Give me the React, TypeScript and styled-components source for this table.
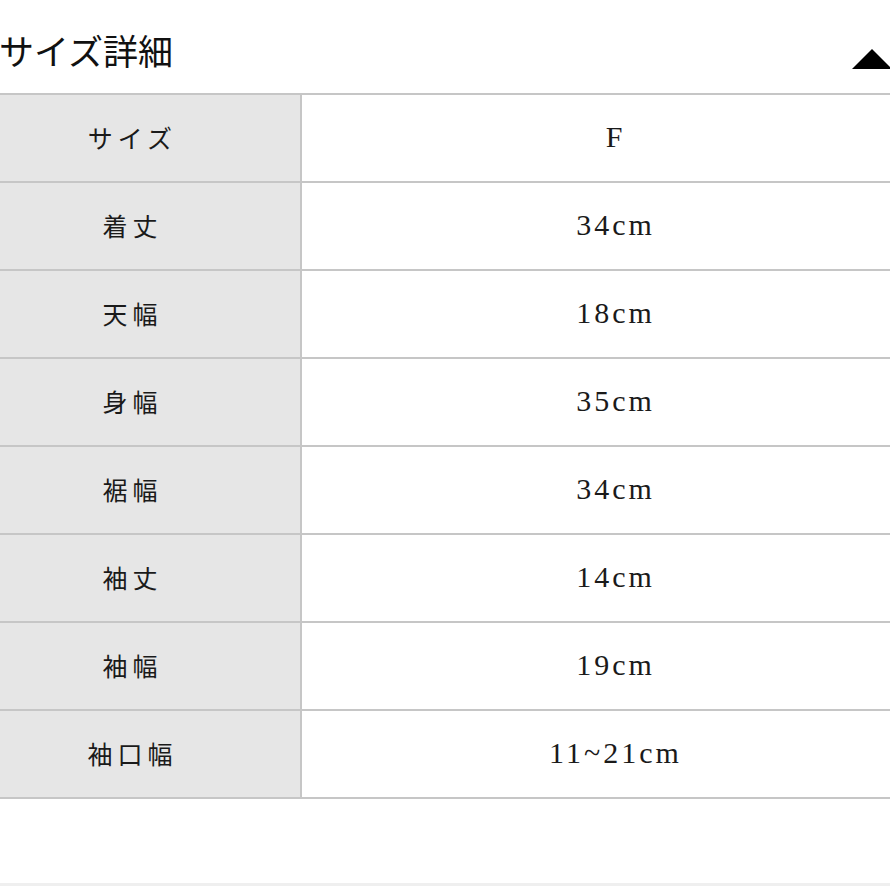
import React from "react"
import styled, { createGlobalStyle } from "styled-components"

type SizeRow = {
    label: string
    value: string
}

const rows: SizeRow[] = [
    { label: "サイズ", value: "F" },
    { label: "着丈", value: "34cm" },
    { label: "天幅", value: "18cm" },
    { label: "身幅", value: "35cm" },
    { label: "裾幅", value: "34cm" },
    { label: "袖丈", value: "14cm" },
    { label: "袖幅", value: "19cm" },
    { label: "袖口幅", value: "11~21cm" },
]

const App: React.FC = () => {
    return (
        <>
            <GlobalStyle />
            <Page>
                <Header>
                    <Title>サイズ詳細</Title>
                    <Toggle aria-label="閉じる">
                        <svg width="40" height="20" viewBox="0 0 40 20">
                            <polygon points="20,0 40,20 0,20" fill="#000" />
                        </svg>
                    </Toggle>
                </Header>
                <SizeTable>
                    {rows.map(row => (
                        <Row key={row.label}>
                            <LabelCell>{row.label}</LabelCell>
                            <ValueCell>{row.value}</ValueCell>
                        </Row>
                    ))}
                </SizeTable>
                <Footer />
            </Page>
        </>
    )
}

export default App

const GlobalStyle = createGlobalStyle`
    html, body {
        margin: 0;
        padding: 0;
        background: #fff;
        overflow: hidden;
    }
    body {
        font-family: "Liberation Serif", "Noto Sans CJK JP", serif;
        color: #111;
    }
`
const Page = styled.div`
    width: 890px;
    height: 890px;
    overflow: hidden;
    display: flex;
    flex-direction: column;
`
const Header = styled.div`
    height: 93px;
    display: flex;
    align-items: center;
    justify-content: space-between;
`
const Title = styled.h2`
    margin: 6px 0 0 -1px;
    font-family: "Noto Sans CJK JP", sans-serif;
    font-weight: 400;
    font-size: 35px;
    line-height: 1;
    color: #111;
`
const Toggle = styled.button`
    margin: 25px -2px 0 0;
    padding: 0;
    border: 0;
    background: none;
    display: flex;
    & svg { display: block; }
`
const SizeTable = styled.div`
    width: 966px;
    margin-left: -40px;
    border-top: 2px solid #c6c6c6;
    display: flex;
    flex-direction: column;
`
const Row = styled.div`
    display: grid;
    grid-template-columns: 342px 1fr;
    height: 88px;
    box-sizing: border-box;
    border-bottom: 2px solid #c6c6c6;
`
const LabelCell = styled.div`
    box-sizing: border-box;
    border-right: 2px solid #c6c6c6;
    background: #e6e6e6;
    display: flex;
    align-items: center;
    justify-content: center;
    padding: 0 0 2px 5px;
    font-family: "Noto Sans CJK JP", serif;
    font-size: 25px;
    letter-spacing: 5px;
    color: #1a1a1a;
`
const ValueCell = styled.div`
    display: flex;
    align-items: center;
    justify-content: center;
    padding: 0 0 2px 3px;
    font-family: "Liberation Serif", "Noto Sans CJK JP", serif;
    font-size: 30px;
    letter-spacing: 3px;
    color: #1a1a1a;
`
const Footer = styled.div`
    margin-top: 84px;
    height: 3px;
    background: #efefef;
`
